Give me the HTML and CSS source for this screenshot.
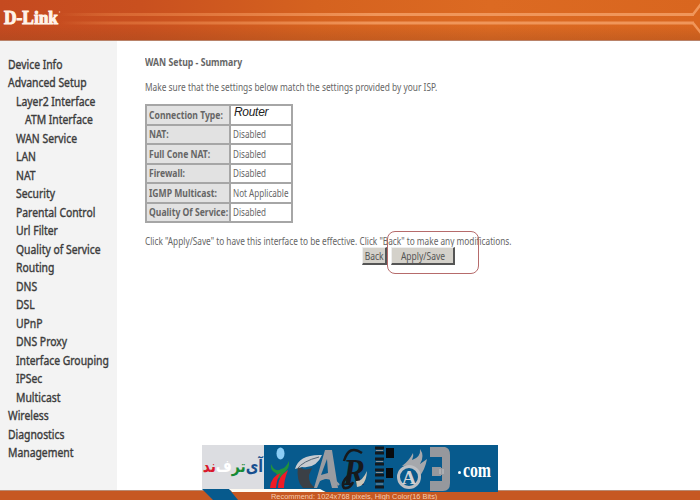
FILE: index.html
```
<!DOCTYPE html>
<html lang="en">
<head>
<meta charset="utf-8">
<title>WAN Setup</title>
<link rel="stylesheet" href="styles.css">
</head>
<body>
<header class="top">
  <svg class="lines" width="700" height="41" viewBox="0 0 700 41">
    <defs><linearGradient id="fade" x1="0" x2="1"><stop offset="0" stop-color="#f39a5a" stop-opacity="0"/><stop offset=".1" stop-color="#e98146" stop-opacity=".5"/><stop offset=".5" stop-color="#f0965a"/><stop offset="1" stop-color="#f0965a"/></linearGradient></defs>
    <rect x="60" y="13" width="634" height="3" fill="url(#fade)"/>
    <rect x="60" y="21.500" width="634" height="3" fill="url(#fade)"/>
    <path d="M693 14.500L701 4M693 23L701 33" stroke="#f0965a" stroke-width="2.500"/>
    <text class="brand" x="4" y="23.500" textLength="54" lengthAdjust="spacingAndGlyphs">D-Link</text>
    <circle cx="59.500" cy="12" r=".8" fill="#f3b79c"/>
  </svg>
</header>
<div class="body">
  <nav class="menu">
    <a>Device Info</a>
    <a>Advanced Setup</a>
    <a class="sub">Layer2 Interface</a>
    <a class="subsub">ATM Interface</a>
    <a class="sub">WAN Service</a>
    <a class="sub">LAN</a>
    <a class="sub">NAT</a>
    <a class="sub">Security</a>
    <a class="sub">Parental Control</a>
    <a class="sub">Url Filter</a>
    <a class="sub">Quality of Service</a>
    <a class="sub">Routing</a>
    <a class="sub">DNS</a>
    <a class="sub">DSL</a>
    <a class="sub">UPnP</a>
    <a class="sub">DNS Proxy</a>
    <a class="sub">Interface Grouping</a>
    <a class="sub">IPSec</a>
    <a class="sub">Multicast</a>
    <a>Wireless</a>
    <a>Diagnostics</a>
    <a>Management</a>
  </nav>
  <main class="content">
    <h1>WAN Setup - Summary</h1>
    <p class="intro">Make sure that the settings below match the settings provided by your ISP.</p>
    <table>
      <tr><th><span>Connection Type:</span></th><td class="router">Router</td></tr>
      <tr><th><span>NAT:</span></th><td><span>Disabled</span></td></tr>
      <tr><th><span>Full Cone NAT:</span></th><td><span>Disabled</span></td></tr>
      <tr><th><span>Firewall:</span></th><td><span>Disabled</span></td></tr>
      <tr><th><span>IGMP Multicast:</span></th><td><span>Not Applicable</span></td></tr>
      <tr><th><span>Quality Of Service:</span></th><td><span>Disabled</span></td></tr>
    </table>
    <p class="note">Click "Apply/Save" to have this interface to be effective. Click "Back" to make any modifications.</p>
    <div class="actions"><button class="back"><span>Back</span></button><button class="apply"><span>Apply/Save</span></button><span class="ring"></span></div>
  </main>
</div>
<footer class="foot"><span>Recommend: 1024x768 pixels, High Color(16 Bits)</span></footer>
<svg class="mark" width="297" height="56" viewBox="202 444 297 56">
  <path d="M230 489H320L326 492H232Z" fill="#fffaf0"/>
  <path d="M202 489H229L238 500H213Z" fill="#075a8d"/>
  <rect x="202" y="445" width="62" height="44" fill="#dcdde1"/>
  <path d="M264 445H498V492H326L320 489H264Z" fill="#075a8d"/>
  <ellipse cx="280.500" cy="453.500" rx="4" ry="6" fill="#8bcdf5"/>
  <path d="M271 464Q275 473 281 469Q286 468 289 461Q290 469 283 474Q280 478 276 480Q279 474 274 472Q270 469 271 464Z" fill="#20923b"/>
  <path d="M288 470Q284 480 284 488H278Q278 480 282 475ZM270 488Q271 476 281 473Q277 477 276 488Z" fill="#f01b25"/>
  <path d="M298 465Q303 472 312 468L309 475Q308 484 316 488H303Q296 482 298 465Z" fill="#3b4046"/>
  <path d="M295 469Q299 454 322 455Q316 469 302 467Z" fill="#c7cbd0"/>
  <path d="M297 469Q303 461 319 457" fill="none" stroke="#536574"/>
  <path d="M314 488L325 450H332L338 488H332L329 477L320 481L317 488ZM321 475L328 473L327 459Z" fill="#9a9ca1" fill-rule="evenodd"/>
  <path d="M318 480Q330 474 339 485" fill="none" stroke="#9a9ca1" stroke-width="2"/>
  <text class="script" x="343" y="485" textLength="22" lengthAdjust="spacingAndGlyphs">R</text>
  <path d="M344 461Q349 444 362 453M350 474Q340 483 344 488Q350 489 353 482" fill="none" stroke="#17191c" stroke-width="2.500"/>
  <path d="M356 481Q362 482 367 471Q366 486 357 487Z" fill="#c8c4b8"/>
  <path d="M375 448H384M375 453H384M375 459H384M375 464H384M375 470H384M375 475H384M375 481H384M375 487H384" stroke="#15191d" stroke-width="3"/>
  <path d="M376 450.500H383M376 461.500H383M376 472.500H383M376 484H383" stroke="#8a9096"/>
  <path d="M386 448H394V458H386ZM386 468H393V478H386Z" fill="#080b0e"/>
  <path d="M402 466Q409 461 413 453Q414 456 412 460Q421 457 420 449Q425 456 420 464L427 459Q425 470 419 477Q417 464 402 466Z" fill="#a6a8ac"/>
  <circle cx="409" cy="477" r="10.500" fill="#075a8d" stroke="#bdbfc3" stroke-width="3"/>
  <text class="a" x="402" y="484" textLength="14" lengthAdjust="spacingAndGlyphs">A</text>
  <path d="M430 447H445Q450 448 450 455V483Q450 491 443 491H430V481H442V475H430V468H442V457H430Z" fill="#96989d"/>
  <path d="M430 457H441V481H430Z" fill="#075a8d"/>
  <path d="M432 467H441V476H432Z" fill="#96989d"/>
  <path d="M440 469V474M443 469V474" stroke="#c2c4c7"/>
  <circle cx="459.500" cy="472.500" r="1.500" fill="#fff"/>
  <text class="com" x="463" y="477" textLength="28" lengthAdjust="spacingAndGlyphs">com</text>
</svg>
<div class="fa" dir="rtl" lang="fa"><span class="blue">آی</span><span class="green">تر</span><span class="white">ف</span><span class="red">ند</span></div>
</body>
</html>
```
FILE: styles.css
```
* { box-sizing: border-box; }
body { margin: 0; width: 700px; height: 500px; overflow: hidden; position: relative; background: #fff; color: #666; font: 10px "Noto Sans", sans-serif; display: flex; flex-direction: column; }
.top { height: 41px; flex: none; border-bottom: 1px solid #b98269; background: linear-gradient(180deg, transparent 65%, rgba(150,70,30,.3)), linear-gradient(90deg, #c54a20, #c9501f 20%, #d5621f 45%, #dc6a22 70%, #d9661f); }
.lines { display: block; }
.brand { font: bold 18px "Liberation Serif", serif; fill: #fff3e8; stroke: #fff3e8; stroke-width: 1px; }
.body { display: flex; height: 449px; flex: none; }
.menu { width: 117px; background: #f3f3f3; padding: 14.500px 0 0 8px; display: flex; flex-direction: column; color: #3c3c3c; font: 12.5px "Noto Sans", sans-serif; }
.menu a { height: 18.520px; line-height: 18.520px; white-space: nowrap; transform: scaleX(.83); transform-origin: 0 0; -webkit-text-stroke: .4px #3c3c3c; }
.menu .sub { margin-left: 8px; }
.menu .subsub { margin-left: 17px; }
.content { padding: 15px 0 0 28px; }
h1 { margin: 0; font-size: 10px; line-height: 12px; height: 25px; transform: scaleX(.87); transform-origin: 0 0; }
p { margin: 0; white-space: nowrap; line-height: 12px; transform: scaleX(.835); transform-origin: 0 0; }
.intro { height: 23px; }
table { border-collapse: collapse; width: 148px; height: 118px; table-layout: fixed; }
th, td { border: 2px solid #a6a6a6; padding: 0 0 0 2px; text-align: left; height: 19.500px; white-space: nowrap; line-height: 12px; }
th span, td span { display: block; width: 0; transform: scaleX(.81); transform-origin: 0 0; }
th span { transform: scaleX(.86); }
th { width: 84px; background: #e2e2e2; }
td.router { color: #222; font: italic 12px "Liberation Sans", sans-serif; vertical-align: top; line-height: 13px; letter-spacing: -.3px; padding-left: 3px; }
.note { margin-top: 12px; transform: scaleX(.827); }
.actions { display: flex; position: relative; margin-left: 217px; gap: 4px; }
button { height: 18px; padding: 0; border: 1px solid; border-color: #eee #555 #555 #eee; border-width: 1px 2px 2px 1px; background: #d4d1ca; color: #555; font: inherit; }
button span { display: inline-block; transform: scaleX(.85); margin: 0 -4px; }
.back { width: 25px; }
.apply { width: 64px; }
.ring { position: absolute; left: 25px; top: -16px; width: 92px; height: 43px; border: 1px solid #b66b6b; border-radius: 8px; }
.foot { height: 10px; flex: none; border-top: 1px solid #b98b73; background: #c65822; overflow: hidden; color: #f7cdb0; font: 7.42px/9px "Liberation Sans", sans-serif; padding: 1px 0 0 271px; white-space: nowrap; }
.mark { position: absolute; left: 202px; top: 444px; }
.fa { position: absolute; left: 203px; top: 452px; width: 60px; height: 28px; display: flex; justify-content: space-between; font: bold 13.8px/28px "DejaVu Sans", sans-serif; transform: scaleY(1.25); }
.blue { color: #174f8f; }
.green { color: #168a35; }
.white { color: #fff; }
.red { color: #d9182c; }
.script { font: italic bold 38px "Liberation Serif", serif; fill: #17191c; }
.a { font: bold 19px "Liberation Serif", serif; fill: #d2d3d5; }
.com { font: bold 20px "Liberation Serif", serif; fill: #fff; }
```
